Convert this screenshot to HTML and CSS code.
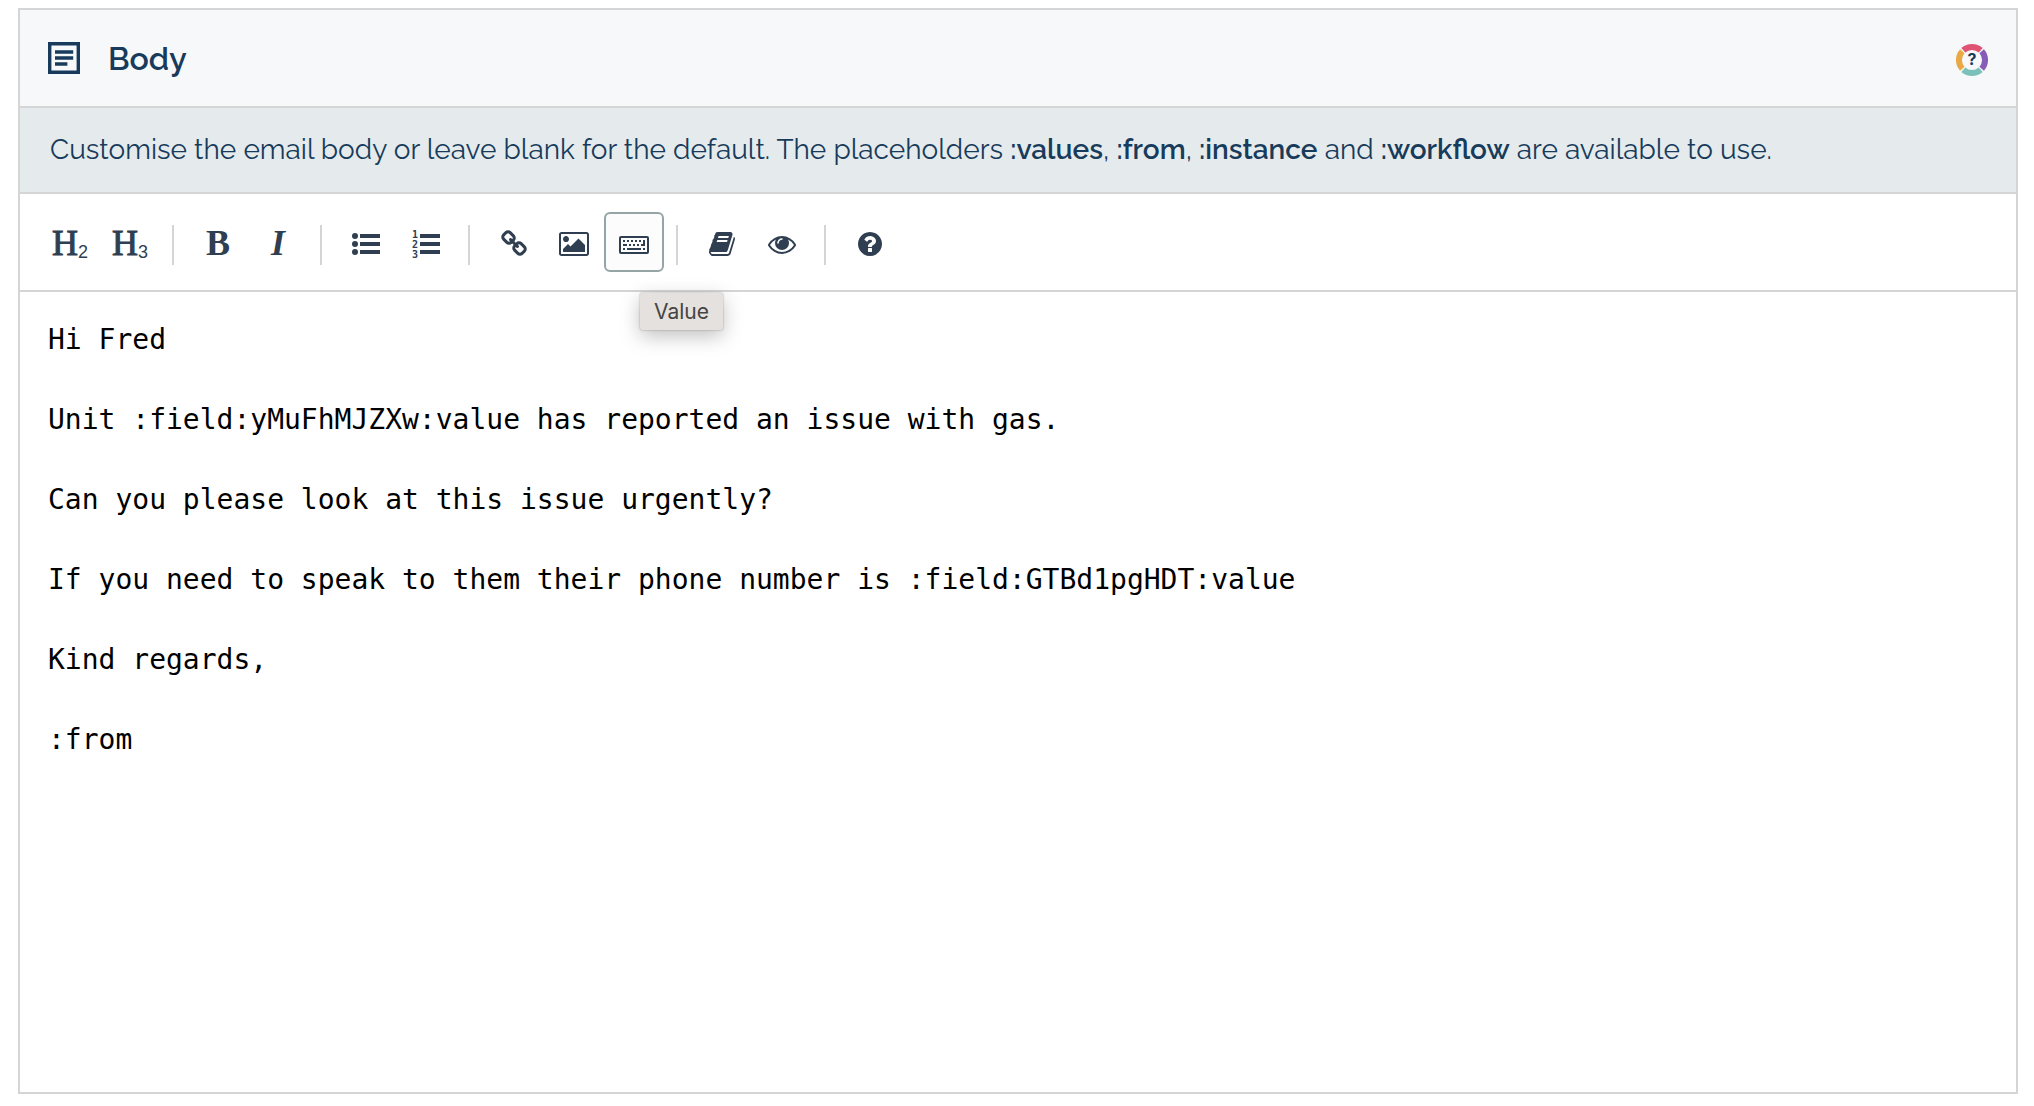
FILE: index.html
```html
<!DOCTYPE html>
<html lang="en">
  <head>
    <meta charset="UTF-8" />
    <meta name="viewport" content="width=device-width, initial-scale=1.0" />
    <title>Email body</title>
    <link rel="stylesheet" href="styles.css">
  </head>
  <body>
    <section class="panel">
      <header class="panel-header">
        <svg class="panel-icon" viewBox="0 0 32 32" aria-hidden="true">
          <path fill-rule="evenodd" d="M0 0h32v32H0zM3.4 3.4v25.2h25.2V3.4zM7 8.2h18.2v3.6H7zM7 14.2h18.2v3.6H7zM7 20.2h12.4v3.6H7z" />
        </svg>
        <h2><label for="body">Body</label></h2>
        <button type="button" class="help-button" aria-label="Help">
          <svg viewBox="0 0 32 32" aria-hidden="true">
            <g fill="none" stroke-width="6">
              <path stroke="#de5472" d="M7.3 6.3A13 13 0 0 1 24.7 6.3" />
              <path stroke="#875bb8" d="M25.7 7.3A13 13 0 0 1 25.7 24.7" />
              <path stroke="#7bc1b9" d="M24.7 25.7A13 13 0 0 1 7.3 25.7" />
              <path stroke="#e9a944" d="M6.3 24.7A13 13 0 0 1 6.3 7.3" />
            </g>
            <text x="16" y="21" text-anchor="middle">?</text>
          </svg>
        </button>
      </header>

      <p class="hint">
        Customise the email body or leave blank for the default. The placeholders
        <strong>:values</strong>, <strong>:from</strong>, <strong>:instance</strong> and
        <strong>:workflow</strong> are available to use.
      </p>

      <div class="toolbar" role="toolbar" aria-label="Formatting">
        <button type="button" class="tool heading" aria-label="Heading 2">H<sub>2</sub></button>
        <button type="button" class="tool heading" aria-label="Heading 3">H<sub>3</sub></button>
        <span class="separator"></span>
        <button type="button" class="tool bold" aria-label="Bold">B</button>
        <button type="button" class="tool italic" aria-label="Italic">I</button>
        <span class="separator"></span>
        <button type="button" class="tool" aria-label="Bulleted list">
          <svg viewBox="0 0 28 28" aria-hidden="true">
            <circle cx="3" cy="8" r="3" />
            <circle cx="3" cy="16" r="3" />
            <circle cx="3" cy="24" r="3" />
            <path d="M8 6h20v4H8zM8 14h20v4H8zM8 22h20v4H8z" />
          </svg>
        </button>
        <button type="button" class="tool" aria-label="Numbered list">
          <svg viewBox="0 0 28 28" aria-hidden="true">
            <g class="list-numbers">
              <text x="0" y="10">1</text>
              <text x="0" y="20">2</text>
              <text x="0" y="30">3</text>
            </g>
            <path d="M8 6h20v4H8zM8 14h20v4H8zM8 22h20v4H8z" />
          </svg>
        </button>
        <span class="separator"></span>
        <button type="button" class="tool" aria-label="Link">
          <svg viewBox="0 -128 1792 1792" aria-hidden="true">
            <path d="M1520 1216q0-40-28-68l-208-208q-28-28-68-28-42 0-72 32 3 3 19 18.5t21.5 21.5 15 19 13 25.5 3.5 27.5q0 40-28 68t-68 28q-15 0-27.5-3.5t-25.5-13-19-15-21.5-21.5-18.5-19q-33 31-33 73 0 40 28 68l206 207q27 27 68 27 40 0 68-26l147-146q28-28 28-67zm-703-705q0-40-28-68l-206-207q-28-28-68-28-39 0-68 27l-147 146q-28 28-28 67 0 40 28 68l208 208q27 27 68 27 42 0 72-31-3-3-19-18.5t-21.5-21.5-15-19-13-25.5-3.5-27.5q0-40 28-68t68-28q15 0 27.5 3.5t25.5 13 19 15 21.5 21.5 18.5 19q33-31 33-73zm895 705q0 120-85 203l-147 146q-83 83-203 83-121 0-204-85l-206-207q-83-83-83-203 0-123 88-209l-88-88q-86 88-208 88-120 0-204-84l-208-208q-84-84-84-204t85-203l147-146q83-83 203-83 121 0 204 85l206 207q83 83 83 203 0 123-88 209l88 88q86-88 208-88 120 0 204 84l208 208q84 84 84 204z" />
          </svg>
        </button>
        <button type="button" class="tool" aria-label="Image">
          <svg viewBox="0 -128 1792 1792" aria-hidden="true">
            <path d="M576 576q0 80-56 136t-136 56-136-56-56-136 56-136 136-56 136 56 56 136zm1024 384v448h-1408v-192l320-320 160 160 512-512zm96-704h-1600q-13 0-22.5 9.5t-9.5 22.5v1216q0 13 9.5 22.5t22.5 9.5h1600q13 0 22.5-9.5t9.5-22.5v-1216q0-13-9.5-22.5t-22.5-9.5zm160 32v1216q0 66-47 113t-113 47h-1600q-66 0-113-47t-47-113v-1216q0-66 47-113t113-47h1600q66 0 113 47t47 113z" />
          </svg>
        </button>
        <button type="button" class="tool active" aria-label="Value" aria-describedby="value-tip">
          <svg viewBox="0 0 28 28" aria-hidden="true">
            <rect x="0" y="9" width="28" height="16" rx="1" fill="none" stroke="currentColor" stroke-width="2" />
            <path d="M3 12h2v2H3zM7 12h2v2H7zM11 12h2v2h-2zM15 12h2v2h-2zM19 12h2v2h-2zM23 12h2v6h-4v-2h2zM3 16h4v2H3zM9 16h2v2H9zM13 16h2v2h-2zM17 16h2v2h-2zM3 20h2v2H3zM7 20h14v2H7zM23 20h2v2h-2z" />
          </svg>
          <span class="tooltip" id="value-tip" role="tooltip">Value</span>
        </button>
        <span class="separator"></span>
        <button type="button" class="tool" aria-label="Templates">
          <svg viewBox="0 -128 1792 1792" aria-hidden="true">
            <path d="M1703 478q40 57 18 129l-275 906q-19 64-76.5 107.5t-122.5 43.5h-923q-77 0-148.5-53.5t-99.5-131.5q-24-67-2-127 0-4 3-27t4-37q1-8-3-21.5t-3-19.5q2-11 8-21t16.5-23.5 16.5-23.5q23-38 45-91.5t30-91.5q3-10 .5-30t-.5-28q3-11 17-28t17-23q21-36 42-92t25-90q1-9-2.5-32t.5-28q4-13 22-30.5t22-22.5q19-26 42.5-84.5t27.5-96.5q1-8-3-25.5t-2-26.5q2-8 9-18t18-23 17-21q8-12 16.5-30.5t15-35 16-36 19.5-32 26.5-23.5 36-11.5 47.5 5.5l-1 3q38-9 51-9h761q74 0 114 56t18 130l-274 906q-36 119-71.5 153.5t-128.5 34.5h-869q-27 0-38 15-11 16-1 43 24 70 144 70h923q29 0 56-15.5t35-41.5l300-987q7-22 5-57 38 15 59 43zm-1064 2q-4 13 2 22.5t20 9.5h608q13 0 25.5-9.5t16.5-22.5l21-64q4-13-2-22.5t-20-9.5h-608q-13 0-25.5 9.5t-16.5 22.5zm-83 256q-4 13 2 22.5t20 9.5h608q13 0 25.5-9.5t16.5-22.5l21-64q4-13-2-22.5t-20-9.5h-608q-13 0-25.5 9.5t-16.5 22.5z" />
          </svg>
        </button>
        <button type="button" class="tool" aria-label="Preview">
          <svg viewBox="0 -128 1792 1792" aria-hidden="true">
            <path d="M1664 960q-152-236-381-353 61 104 61 225 0 185-131.5 316.5t-316.5 131.5-316.5-131.5-131.5-316.5q0-121 61-225-229 117-381 353 133 205 333.5 326.5t434.5 121.5 434.5-121.5 333.5-326.5zm-720-384q0-20-14-34t-34-14q-125 0-214.5 89.5t-89.5 214.5q0 20 14 34t34 14 34-14 14-34q0-86 61-147t147-61q20 0 34-14t14-34zm848 384q0 34-20 69-140 230-376.5 368.5t-499.5 138.5-499.5-139-376.5-368q-20-35-20-69t20-69q140-229 376.5-368t499.5-139 499.5 139 376.5 368q20 35 20 69z" />
          </svg>
        </button>
        <span class="separator"></span>
        <button type="button" class="tool" aria-label="Guide">
          <svg viewBox="0 -128 1792 1792" aria-hidden="true">
            <path d="M1024 1376v-192q0-14-9-23t-23-9h-192q-14 0-23 9t-9 23v192q0 14 9 23t23 9h192q14 0 23-9t9-23zm256-672q0-88-55.5-163t-138.5-116-170-41q-243 0-371 213-15 24 8 42l132 100q7 6 19 6 16 0 25-12 53-68 86-92 34-24 86-24 48 0 85.5 26t37.5 59q0 38-20 61t-68 45q-63 28-115.5 86.5t-52.5 125.5v36q0 14 9 23t23 9h192q14 0 23-9t9-23q0-19 21.5-49.5t54.5-49.5q32-18 49-28.5t46-35 44.5-48 28-60.5 12.5-81zm384 192q0 209-103 385.5t-279.5 279.5-385.5 103-385.5-103-279.5-279.5-103-385.5 103-385.5 279.5-279.5 385.5-103 385.5 103 279.5 279.5 103 385.5z" />
          </svg>
        </button>
      </div>

      <textarea id="body" class="editor" spellcheck="false">Hi Fred

Unit :field:yMuFhMJZXw:value has reported an issue with gas.

Can you please look at this issue urgently?

If you need to speak to them their phone number is :field:GTBd1pgHDT:value

Kind regards,

:from</textarea>
    </section>
  </body>
</html>
```
FILE: styles.css
```css
:root {
  --navy: #183b5b;
  --tool-color: #2f3e50;
  --border-color: #d5d5d5;
}
* {
  box-sizing: border-box;
}
body {
  margin: 0;
  padding: 8px 16px 12px 18px;
  min-height: 100vh;
  display: flex;
  flex-direction: column;
  background: #fff;
  color: var(--navy);
  font-family: Raleway, Lato, sans-serif;
  font-size: 28px;
}
button {
  padding: 0;
  border: none;
  background: none;
  color: inherit;
  cursor: pointer;
}
svg {
  display: block;
  fill: currentColor;
  overflow: visible;
}
.panel {
  flex: 1;
  display: flex;
  flex-direction: column;
  border: 2px solid var(--border-color);
}
.panel-header {
  display: flex;
  align-items: center;
  gap: 28px;
  padding: 24px 28px;
  background: #f7f8fa;
  border-bottom: 2px solid var(--border-color);
}
.panel-icon {
  width: 32px;
  height: 32px;
}
.panel-header h2 {
  flex: 1;
  margin: 0;
  padding-top: 2px;
  font-size: 32px;
  line-height: 46px;
  font-weight: 600;
}
.help-button {
  padding-top: 4px;
}
.help-button svg {
  width: 32px;
  height: 32px;
}
.help-button text {
  font: bold 16px Inter, sans-serif;
}
.hint {
  margin: 0;
  padding: 22px 30px;
  line-height: 40px;
  background: #e5ebed;
  border-bottom: 2px solid var(--border-color);
}
.hint strong {
  font-weight: 600;
}
.toolbar {
  display: flex;
  flex-wrap: wrap;
  align-items: center;
  padding: 18px 20px;
  border-bottom: 2px solid var(--border-color);
  color: var(--tool-color);
}
.tool {
  position: relative;
  display: flex;
  align-items: center;
  justify-content: center;
  width: 60px;
  height: 60px;
  border: 2px solid transparent;
  border-radius: 6px;
}
.tool svg {
  width: 28px;
  height: 28px;
}
.tool:hover,
.tool.active {
  background: #fcfcfc;
  border-color: #95a5a6;
}
.heading,
.bold,
.italic {
  padding-top: 2px;
  font-family: "Liberation Serif", serif;
  font-size: 36px;
  line-height: 40px;
}
.heading {
  -webkit-text-stroke: 1px currentColor;
}
.heading sub {
  align-self: flex-end;
  font: 18px/20px "Liberation Sans", sans-serif;
  -webkit-text-stroke: 0;
  padding-bottom: 8px;
}
.bold {
  font-weight: 700;
}
.italic {
  font-weight: 700;
  font-style: italic;
}
.list-numbers {
  font: bold 10px "DejaVu Sans Mono", monospace;
}
.separator {
  width: 2px;
  height: 40px;
  margin: 6px 14px 0 12px;
  background: var(--border-color);
}
.tooltip {
  position: absolute;
  top: 79px;
  left: 34px;
  padding: 1px 14px 0;
  font: 21px/36px Inter, sans-serif;
  color: #464442;
  background: #e5e1de;
  border-radius: 2px;
  box-shadow: 0 0 2px rgba(0, 0, 0, 0.35), 0 6px 20px rgba(0, 0, 0, 0.25);
}
.editor {
  flex: 1;
  width: 100%;
  min-height: 400px;
  padding: 28px;
  border: none;
  outline: none;
  resize: none;
  color: #000;
  background: #fff;
  font: 28px/40px Menlo, "DejaVu Sans Mono", monospace;
}
```
